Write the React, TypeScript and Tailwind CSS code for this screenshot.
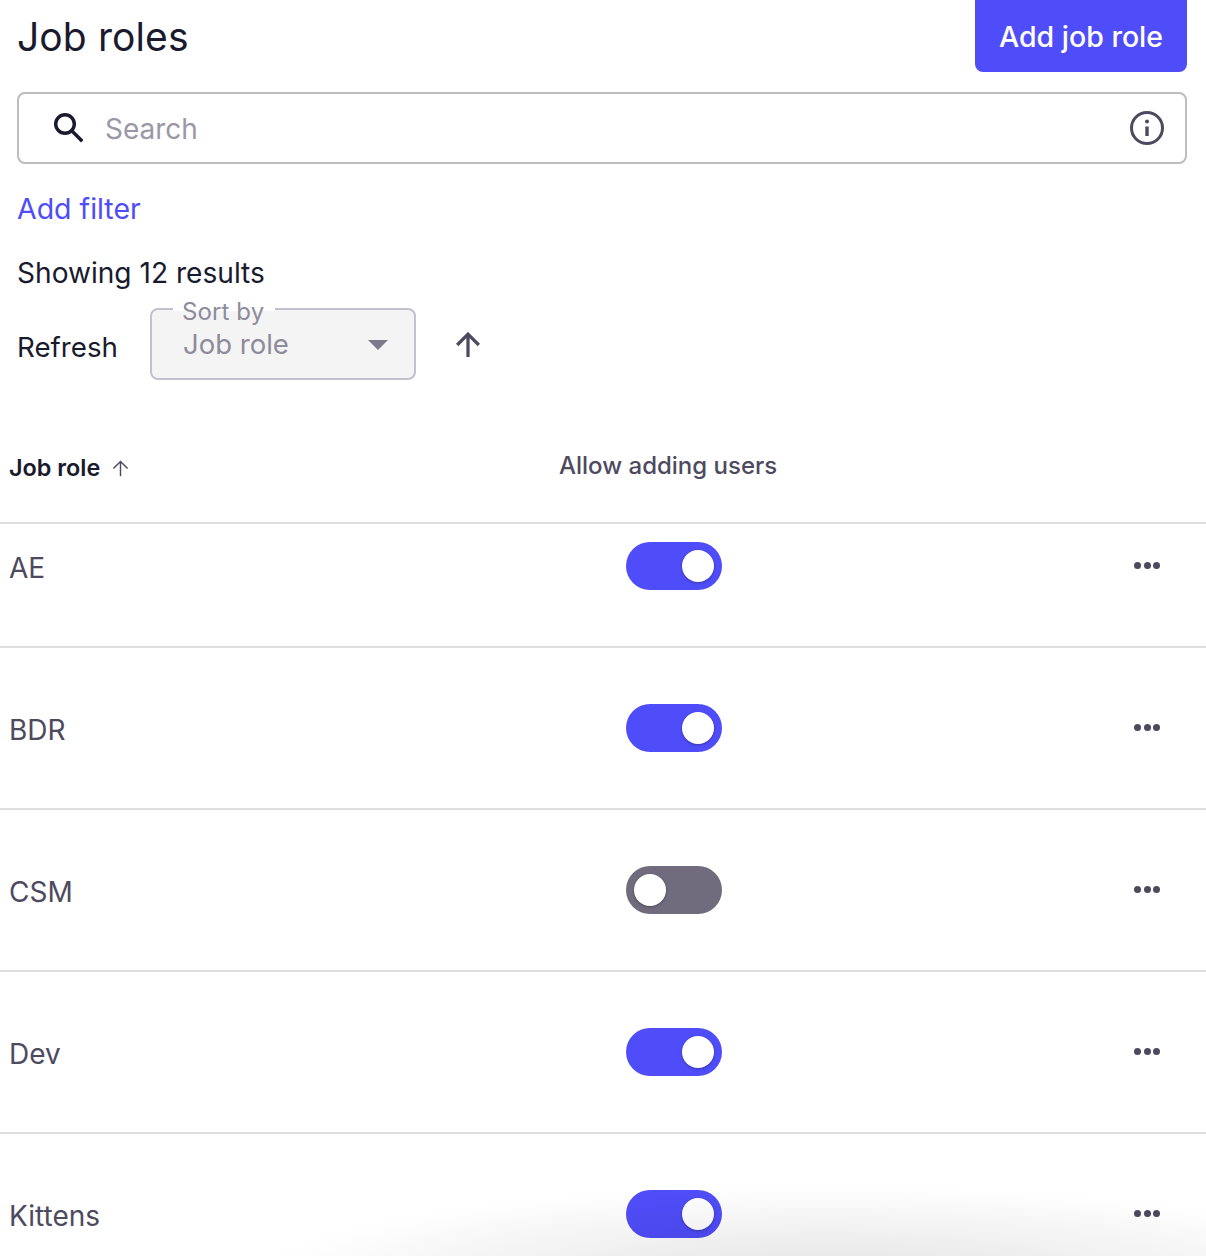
const roles = [
  { name: "AE", on: true, first: true },
  { name: "BDR", on: true },
  { name: "CSM", on: false },
  { name: "Dev", on: true },
  { name: "Kittens", on: true },
];

function SearchIcon() {
  return (
    <svg width="30" height="30" viewBox="0 0 30 30" fill="none" stroke="#1a1a2e" strokeWidth="3.4">
      <circle cx="12" cy="11" r="9.3" />
      <path d="M19 18 L28 27" strokeLinecap="square" />
    </svg>
  );
}

function InfoIcon() {
  return (
    <svg width="34" height="34" viewBox="0 0 34 34" fill="none" stroke="#4d4a60" strokeWidth="3">
      <circle cx="17" cy="17" r="15.5" />
      <path d="M17 15.5V25" strokeWidth="3.4" />
      <circle cx="17" cy="10.5" r="2" fill="#4d4a60" stroke="none" />
    </svg>
  );
}

function UpArrow({ size, width, color }: { size: number; width: number; color: string }) {
  return (
    <svg width={size} height={size} viewBox="0 0 24 24" fill="none" stroke={color} strokeWidth={width}>
      <path d="M12 23V2M2 12L12 2L22 12" />
    </svg>
  );
}

function Toggle({ on }: { on: boolean }) {
  return (
    <div className={`w-[96px] h-[48px] rounded-full flex items-center px-[8px] ${on ? "bg-[#4f4df9] justify-end" : "bg-[#706c7d] justify-start"}`}>
      <div className="w-[32px] h-[32px] rounded-full bg-white shadow-[0_1px_3px_rgba(0,0,0,0.3)]" />
    </div>
  );
}

function Dots() {
  return (
    <div className="flex gap-[2.5px] w-[28px] justify-center pb-[1px]">
      <span className="w-[7px] h-[7px] rounded-full bg-[#4d4a60]" />
      <span className="w-[7px] h-[7px] rounded-full bg-[#4d4a60]" />
      <span className="w-[7px] h-[7px] rounded-full bg-[#4d4a60]" />
    </div>
  );
}

export default function App() {
  return (
    <div className="relative w-[1206px] h-[1256px] overflow-hidden bg-white font-['Inter',sans-serif] text-[#1a1a2e]">
      <div className="pl-[17px] pr-[19px]">
        <div className="flex items-center justify-between h-[72px]">
          <h1 className="text-[39px] leading-[72px] font-normal pt-[1px] tracking-[0.1px]">Job roles</h1>
          <button className="w-[212px] h-[72px] pt-[2px] bg-[#4f4df9] text-white text-[28.5px] font-medium rounded-b-[8px] rounded-t-none">
            Add job role
          </button>
        </div>

        <div className="mt-[20px] h-[72px] rounded-[8px] border-2 border-[#bdbdbd] flex items-center pl-[34px] pr-[21px]">
          <SearchIcon />
          <span className="ml-[22px] pt-[1px] text-[28px] text-[#9a97a6]">Search</span>
          <div className="ml-auto"><InfoIcon /></div>
        </div>

        <div className="mt-[27px] text-[28.5px] leading-[36px] text-[#4f4df9]">Add filter</div>
        <div className="mt-[28px] text-[28.1px] leading-[36px]">Showing 12 results</div>

        <div className="mt-[17px] flex items-center">
          <span className="w-[133px] pt-[6px] text-[27.7px] leading-[36px]">Refresh</span>
          <div className="relative w-[266px] h-[72px] rounded-[8px] border-2 border-[#c4c1cf] bg-[#f4f4f5] flex items-center pl-[31px] pr-[26px]">
            <span className="absolute left-[21px] -top-[12px] pl-[9px] pr-[11px] text-[24px] tracking-[0.1px] leading-[28px] text-[#8e8b9b] bg-[linear-gradient(to_bottom,white_45%,transparent_45%)]">Sort by</span>
            <span className="text-[27.5px] leading-[36px] text-[#8e8b9b]">Job role</span>
            <span className="ml-auto mt-[1px] w-0 h-0 border-x-[10px] border-x-transparent border-t-[10px] border-t-[#7d7a8c]" />
          </div>
          <div className="ml-[39px] pt-[1px]"><UpArrow size={26} width={3} color="#4d4a60" /></div>
        </div>
      </div>

      <div className="mt-[60px] h-[82px] flex items-start pl-[9px] border-b-2 border-[#dedede] box-content">
        <div className="w-[550px] flex items-center pt-[13px] gap-[12px]">
          <span className="text-[23.4px] leading-[30px] font-semibold">Job role</span>
          <UpArrow size={17} width={2} color="#4d4a60" />
        </div>
        <span className="pt-[11px] text-[24px] leading-[30px] font-medium text-[#4d4a60]">Allow adding users</span>
      </div>

      {roles.map((r) => (
        <div
          key={r.name}
          className={`flex items-center pl-[9px] pr-[45px] border-b-2 border-[#dedede] ${r.first ? "h-[124px] pb-[38px]" : "h-[162px]"}`}
        >
          <span className="w-[617px] pt-[4px] text-[28px] leading-[36px] text-[#4d4a60]">{r.name}</span>
          <Toggle on={r.on} />
          <div className="ml-auto"><Dots /></div>
        </div>
      ))}

      <div className="absolute left-[260px] right-0 bottom-0 h-[70px] pointer-events-none bg-[radial-gradient(ellipse_at_60%_130%,rgba(0,0,0,0.11),rgba(0,0,0,0)_72%)]" />
    </div>
  );
}
